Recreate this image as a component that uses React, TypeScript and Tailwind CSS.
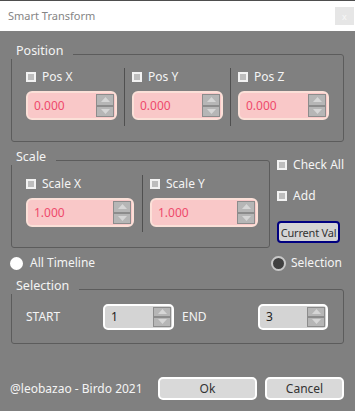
import React from "react";

const font = { fontFamily: '"Noto Sans", "Open Sans", sans-serif' };

function Check({ label }: { label: string }) {
  return (
    <div className="flex items-center h-4 whitespace-nowrap">
      <span className="w-[10px] h-[10px] border-2 border-[#f2f2f2] bg-[#bdbdbd] shrink-0" />
      <span className="ml-[6px] text-[12px] text-[#f4f4f4] leading-4">{label}</span>
    </div>
  );
}

function Spinner() {
  return (
    <div className="flex flex-col w-[18px] shrink-0">
      {[0, 1].map((i) => (
        <div
          key={i}
          className="flex-1 bg-[#b6b6b6] border border-[#8c8c8c] flex items-center justify-center"
        >
          <svg width="9" height="5" viewBox="0 0 9 5">
            {i === 0 ? (
              <polygon points="0,5 4.5,0 9,5" fill="#d6d6d6" />
            ) : (
              <polygon points="0,0 4.5,5 9,0" fill="#d6d6d6" />
            )}
          </svg>
        </div>
      ))}
    </div>
  );
}

function PinkInput({ value, w }: { value: string; w: string }) {
  return (
    <div
      className={`${w} h-[29px] rounded-[6px] bg-[#f9c8c8] border-2 border-[#fbe0d8] flex items-stretch py-[1px] pr-[1px]`}
    >
      <span className="flex-1 pl-[6px] text-[12px] text-[#ee4a6c] flex items-center">{value}</span>
      <Spinner />
    </div>
  );
}

function GrayInput({ value, w }: { value: string; w: string }) {
  return (
    <div
      className={`${w} h-[26px] rounded-[5px] bg-[#d4d4d4] border-2 border-white flex items-stretch py-[1px] pr-[1px]`}
    >
      <span className="flex-1 pl-[6px] text-[12px] text-[#222] flex items-center">{value}</span>
      <Spinner />
    </div>
  );
}

function Group({
  title,
  className,
  children,
}: {
  title: string;
  className: string;
  children: React.ReactNode;
}) {
  return (
    <div className={`relative border border-[#5c5c5c] rounded-[3px] ${className}`}>
      <span className="absolute left-[-1px] top-[-12px] h-4 bg-[#808080] pl-[5px] pr-[10px] text-[12.5px] leading-4 text-[#f4f4f4]">
        {title}
      </span>
      {children}
    </div>
  );
}

function Sep() {
  return <div className="w-px bg-[#505050] self-stretch" />;
}

export default function App() {
  return (
    <div className="w-[355px] h-[411px] bg-[#808080] flex flex-col" style={font}>
      <div className="h-px bg-[#4e4e4e]" />
      <div className="h-[30px] bg-white flex items-center justify-between pl-2 pr-[1px]">
        <span className="text-[11px] text-[#858585]">Smart Transform</span>
        <div className="w-[19px] h-[18px] bg-[#e6e6e6] flex items-center justify-center text-[9px] text-[#f8f8f8] leading-none">
          x
        </div>
      </div>

      <div className="flex flex-col px-[11px]">
        {/* Position */}
        <Group title="Position" className="mt-[23px] h-[88px] pl-[14px]">
          <div className="mt-[13px] h-[58px] flex">
            {["Pos X", "Pos Y", "Pos Z"].map((l, i) => (
              <React.Fragment key={l}>
                {i > 0 && (
                  <>
                    <div className="w-[7px]" />
                    <Sep />
                    <div className="w-[7px]" />
                  </>
                )}
                <div className="flex flex-col pt-[1px] gap-[6px]">
                  <Check label={l} />
                  <PinkInput value="0.000" w="w-[91px]" />
                </div>
              </React.Fragment>
            ))}
          </div>
        </Group>

        {/* Scale row */}
        <div className="flex mt-[18px]">
          <Group title="Scale" className="w-[263px] h-[88px] pl-[14px]">
            <div className="mt-[14px] h-[57px] flex">
              <div className="flex flex-col pt-[1px] gap-[6px]">
                <Check label="Scale X" />
                <PinkInput value="1.000" w="w-[108px]" />
              </div>
              <div className="w-[8px]" />
              <Sep />
              <div className="w-[7px]" />
              <div className="flex flex-col pt-[1px] gap-[6px]">
                <Check label="Scale Y" />
                <PinkInput value="1.000" w="w-[108px]" />
              </div>
            </div>
          </Group>
          <div className="ml-[7px] flex flex-col">
            <div className="-mt-[3px]">
              <Check label="Check All" />
            </div>
            <div className="mt-[15px]">
              <Check label="Add" />
            </div>
            <div className="mt-[17px] w-[63px] h-[22px] border-2 border-[#000080] rounded-[4px] bg-[#d4d4d4] flex items-center justify-center text-[11px] tracking-[-0.2px] text-[#333] whitespace-nowrap overflow-hidden leading-none">
              Current Val
            </div>
          </div>
        </div>

        {/* Radios */}
        <div className="flex items-center justify-between mt-[8px] h-[14px] -ml-px">
          <div className="flex items-center">
            <span className="w-[13px] h-[13px] rounded-full bg-white border-2 border-white" />
            <span className="ml-[7px] text-[12px] text-[#f4f4f4]">All Timeline</span>
          </div>
          <div className="flex items-center mr-[2px]">
            <span className="w-[15px] h-[15px] rounded-full bg-[#404040] border-2 border-[#c8c8c8]" />
            <span className="ml-[5px] text-[12px] text-[#f4f4f4]">Selection</span>
          </div>
        </div>

        {/* Selection */}
        <Group title="Selection" className="mt-[19px] h-[55px] pl-[14px] flex items-center">
          <span className="w-[77px] text-[12px] text-[#f4f4f4]">START</span>
          <GrayInput value="1" w="w-[71px]" />
          <span className="ml-[8px] w-[76px] text-[12px] text-[#f4f4f4]">END</span>
          <GrayInput value="3" w="w-[70px]" />
        </Group>

        {/* Footer */}
        <div className="flex items-center mt-[33px] h-[23px]">
          <span className="-ml-px text-[12px] text-[#f4f4f4]">@leobazao - Birdo 2021</span>
          <div className="ml-auto flex gap-[8px]">
            <div className="w-[99px] h-[23px] rounded-[5px] bg-[#d9d9d9] border-2 border-white flex items-center justify-center text-[12px] text-[#333]">
              Ok
            </div>
            <div className="w-[79px] h-[23px] rounded-[5px] bg-[#d9d9d9] border-2 border-white flex items-center justify-center text-[12px] text-[#333]">
              Cancel
            </div>
          </div>
        </div>
      </div>
    </div>
  );
}
